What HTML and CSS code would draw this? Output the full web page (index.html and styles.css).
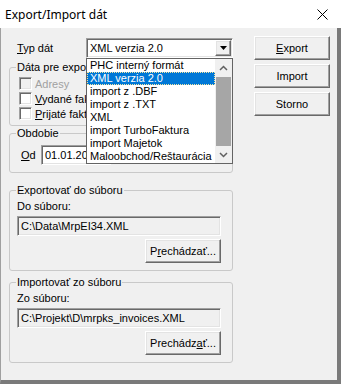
FILE: index.html
```html
<!DOCTYPE html>
<html lang="sk">
<head>
    <meta charset="UTF-8">
    <title>Export/Import dát</title>
    <link rel="stylesheet" href="styles.css">
</head>
<body>
    <div class="window">
        <div class="titlebar">
            <span class="title">Export/Import dát</span>
            <svg class="close" width="11" height="11" viewBox="0 0 11 11">
                <path d="M0.5 0.5L10.5 10.5M10.5 0.5L0.5 10.5" stroke="#000" stroke-width="1" fill="none"/>
            </svg>
        </div>

        <div class="client">
            <div class="main">
                <div class="type-row">
                    <span class="type-label"><u>T</u>yp dát</span>
                    <div class="combo">
                        <div class="combo-text">XML verzia 2.0</div>
                        <div class="combo-btn">
                            <svg width="7" height="4" viewBox="0 0 7 4"><path d="M0 0H7L3.5 4Z" fill="#000"/></svg>
                        </div>

                        <!-- open drop-down list -->
                        <div class="combo-list">
                            <div class="items">
                                <div class="item">PHC interný formát</div>
                                <div class="item selected">XML verzia 2.0</div>
                                <div class="item">import z .DBF</div>
                                <div class="item">import z .TXT</div>
                                <div class="item">XML</div>
                                <div class="item">import TurboFaktura</div>
                                <div class="item">import Majetok</div>
                                <div class="item">Maloobchod/Reštaurácia</div>
                            </div>
                            <div class="scrollbar">
                                <div class="sb-arrow">
                                    <svg width="9" height="6" viewBox="0 0 9 6"><path d="M1 5L4.5 1.5L8 5" stroke="#606060" stroke-width="1.5" fill="none"/></svg>
                                </div>
                                <div class="sb-track">
                                    <div class="sb-thumb"></div>
                                </div>
                                <div class="sb-arrow">
                                    <svg width="9" height="6" viewBox="0 0 9 6"><path d="M1 1L4.5 4.5L8 1" stroke="#606060" stroke-width="1.5" fill="none"/></svg>
                                </div>
                            </div>
                        </div>
                    </div>
                </div>

                <div class="group group-data">
                    <div class="group-title">Dáta pre export</div>
                    <div class="checks">
                        <div class="check disabled"><span class="box"></span>Adresy</div>
                        <div class="check"><span class="box"></span><span><u>V</u>ydané faktúry</span></div>
                        <div class="check"><span class="box"></span><span><u>P</u>rijaté faktúry</span></div>
                    </div>
                </div>

                <div class="group group-period">
                    <div class="group-title">Obdobie</div>
                    <div class="period-row">
                        <span class="period-label"><u>O</u>d</span>
                        <div class="edit date-edit">01.01.2020</div>
                    </div>
                </div>

                <div class="group group-export">
                    <div class="group-title">Exportovať do súboru</div>
                    <div class="field-label">Do súboru:</div>
                    <div class="edit readonly">C:\Data\MrpEI34.XML</div>
                    <div class="browse-row">
                        <div class="btn">P<u>r</u>echádzať...</div>
                    </div>
                </div>

                <div class="group group-import">
                    <div class="group-title">Importovať zo súboru</div>
                    <div class="field-label">Zo súboru:</div>
                    <div class="edit readonly">C:\Projekt\D\mrpks_invoices.XML</div>
                    <div class="browse-row">
                        <div class="btn">Prechádz<u>a</u>ť...</div>
                    </div>
                </div>
            </div>

            <div class="side">
                <div class="btn default"><u>E</u>xport</div>
                <div class="btn">Import</div>
                <div class="btn">Storno</div>
            </div>
        </div>
    </div>
</body>
</html>
```

FILE: styles.css
```css
body {
    margin: 0;
    font-family: "Liberation Sans", Arial, sans-serif;
    font-size: 11px;
    color: #000;
    background-color: #f0f0f0;
}
.window {
    width: 341px;
    height: 384px;
    display: flex;
    flex-direction: column;
    background-color: #f0f0f0;
}
.titlebar {
    height: 28px;
    flex: none;
    background-color: #fff;
    display: flex;
    align-items: center;
    justify-content: space-between;
    padding: 0 13px 0 5px;
    box-sizing: border-box;
}
.title {
    font-family: "Noto Sans", sans-serif;
    font-size: 12px;
}
.close {
    display: block;
}
.client {
    flex: 1;
    display: flex;
    align-items: flex-start;
    border-left: 1px solid #a0a0a0;
    border-right: 4px solid #7a7a7a;
    border-bottom: 4px solid #7a7a7a;
    padding: 8px 0 0 8px;
}
.main {
    width: 224px;
    margin-top: 2px;
}
.side {
    margin-left: 21px;
    display: flex;
    flex-direction: column;
    gap: 4px;
}

/* raised and sunken 3d edges */
.btn {
    width: 76px;
    height: 24px;
    box-sizing: border-box;
    border: 1px solid;
    border-color: #fff #696969 #696969 #fff;
    box-shadow: inset -1px -1px #a0a0a0, inset 1px 1px #e3e3e3;
    background-color: #f0f0f0;
    display: flex;
    align-items: center;
    justify-content: center;
}
.edit, .combo, .box {
    box-sizing: border-box;
    border: 1px solid;
    border-color: #a0a0a0 #fff #fff #a0a0a0;
    box-shadow: inset 1px 1px #696969, inset -1px -1px #e3e3e3;
    background-color: #fff;
}

.type-row {
    display: flex;
    align-items: center;
    height: 20px;
}
.type-label {
    width: 69px;
    margin-left: 8px;
}
.combo {
    position: relative;
    width: 147px;
    height: 20px;
    padding: 1px;
    display: flex;
}
.combo-text {
    flex: 1;
    padding-left: 2px;
    line-height: 16px;
}
.combo-btn {
    width: 16px;
    height: 16px;
    box-sizing: border-box;
    border: 1px solid;
    border-color: #fff #696969 #696969 #fff;
    box-shadow: inset -1px -1px #a0a0a0, inset 1px 1px #e3e3e3;
    background-color: #f0f0f0;
    display: flex;
    align-items: center;
    justify-content: center;
}
.combo-list {
    position: absolute;
    top: 19px;
    left: -1px;
    width: 147px;
    height: 106px;
    box-sizing: border-box;
    border: 1px solid #646464;
    background-color: #fff;
    display: flex;
    z-index: 10;
}
.items {
    flex: 1;
}
.item {
    height: 13px;
    line-height: 13px;
    padding-left: 3px;
    white-space: nowrap;
}
.item.selected {
    background-color: #0078d7;
    color: #fff;
    outline: 1px dotted #f5e6a0;
    outline-offset: -1px;
}
.scrollbar {
    width: 17px;
    background-color: #f0f0f0;
    display: flex;
    flex-direction: column;
}
.sb-arrow {
    height: 17px;
    display: flex;
    align-items: center;
    justify-content: center;
}
.sb-track {
    flex: 1;
    padding-top: 1px;
}
.sb-thumb {
    height: 69px;
    margin: 0 1px;
    background-color: #a6a6a6;
}

.group {
    border: 1px solid #c9c9c9;
    border-radius: 3px;
    padding: 0 11px 7px 7px;
}
.group-title {
    display: table;
    margin: -7px 0 0 -1px;
    padding: 0 1px;
    line-height: 13px;
    background-color: #f0f0f0;
}
.group-data {
    margin-top: 9px;
    padding-bottom: 5px;
}
.checks {
    margin-top: 3px;
    display: flex;
    flex-direction: column;
    gap: 2px;
}
.check {
    display: flex;
    align-items: center;
    height: 13px;
    padding-left: 2px;
    white-space: nowrap;
}
.box {
    width: 13px;
    height: 13px;
    margin-right: 3px;
    flex: none;
}
.check.disabled {
    color: #a0a0a0;
}
.check.disabled .box {
    background-color: #f0f0f0;
}

.group-period {
    margin-top: 7px;
}
.period-row {
    margin-top: 5px;
    display: flex;
    align-items: center;
}
.period-label {
    width: 20px;
    margin-left: 4px;
}
.date-edit {
    width: 70px;
    height: 20px;
    padding-left: 3px;
    line-height: 18px;
}

.group-export {
    margin-top: 17px;
}
.group-import {
    margin-top: 11px;
}
.field-label {
    margin-top: 3px;
    line-height: 13px;
}
.edit.readonly {
    margin-top: 3px;
    height: 20px;
    padding-left: 3px;
    line-height: 18px;
    background-color: #f0f0f0;
}
.browse-row {
    margin-top: 3px;
    display: flex;
    justify-content: flex-end;
}
```
